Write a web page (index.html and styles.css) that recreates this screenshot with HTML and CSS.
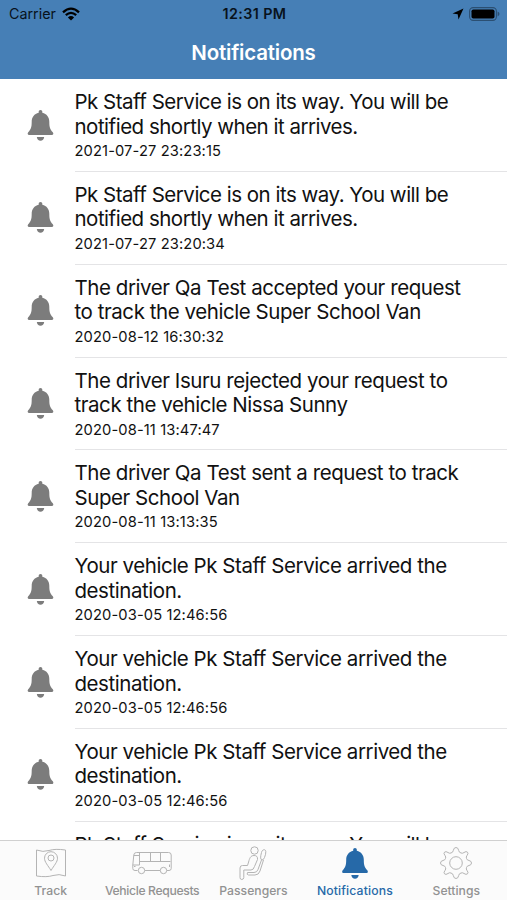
FILE: index.html
```html
<!DOCTYPE html>
<html lang="en">
<head>
<meta charset="utf-8">
<title>Notifications</title>
<link rel="stylesheet" href="styles.css">
</head>
<body>
<svg class="defs" aria-hidden="true">
  <symbol id="bell" viewBox="0 0 26 31">
    <path d="M13 0C11.900 0 11.200.8 11.200 1.800V2.800C6.800 3.700 4.200 7.300 4.200 11.800C4.200 17 3.600 19.300.7 22.300C-.3 23.600.1 25 1.700 25H24.300C25.900 25 26.300 23.600 25.300 22.300C22.400 19.300 21.800 17 21.800 11.800C21.800 7.300 19.200 3.700 14.800 2.800V1.800C14.800.8 14.100 0 13 0Z"/>
    <path d="M9.300 27H16.700C16.500 29.200 15 30.700 13 30.700S9.500 29.200 9.300 27Z"/>
  </symbol>
</svg>
<div class="screen">
  <header class="header">
    <div class="status">
      <div class="carrier"><span>Carrier</span>
        <svg class="wifi" viewBox="0 0 18 14"><path d="M1 5.300Q9-2 17 5.300" /><path d="M3.800 8.200Q9 3.600 14.200 8.200"/><path class="dot" d="M9 13.500L5.900 10.400Q9 7.800 12.100 10.400Z"/></svg>
      </div>
      <div class="clock">12:31 PM</div>
      <div class="power">
        <svg class="arrow" viewBox="0 0 12 12"><path d="M11.500.5L6.500 11.500L5.700 6.300L.5 5.500Z"/></svg>
        <svg class="battery" viewBox="0 0 31 14"><rect class="shell" x=".6" y=".6" width="26.800" height="12.800" rx="3.600"/><rect x="2.500" y="2.500" width="23" height="9" rx="1.800"/><path class="cap" d="M28.600 4.600Q30.500 5.500 30.500 7T28.600 9.400Z"/></svg>
      </div>
    </div>
    <h1>Notifications</h1>
  </header>
  <main class="list">
    <article class="row"><svg class="bell"><use href="#bell"/></svg><div class="body"><p class="tight">Pk Staff Service is on its way. You will be<br>notified shortly when it arrives.</p><time>2021-07-27 23:23:15</time></div></article>
    <article class="row"><svg class="bell"><use href="#bell"/></svg><div class="body"><p class="tight">Pk Staff Service is on its way. You will be<br>notified shortly when it arrives.</p><time>2021-07-27 23:20:34</time></div></article>
    <article class="row"><svg class="bell"><use href="#bell"/></svg><div class="body"><p>The driver Qa Test accepted your request<br>to track the vehicle Super School Van</p><time>2020-08-12 16:30:32</time></div></article>
    <article class="row"><svg class="bell"><use href="#bell"/></svg><div class="body"><p>The driver Isuru rejected your request to<br>track the vehicle Nissa Sunny</p><time>2020-08-11 13:47:47</time></div></article>
    <article class="row"><svg class="bell"><use href="#bell"/></svg><div class="body"><p>The driver Qa Test sent a request to track<br>Super School Van</p><time>2020-08-11 13:13:35</time></div></article>
    <article class="row"><svg class="bell"><use href="#bell"/></svg><div class="body"><p>Your vehicle Pk Staff Service arrived the<br>destination.</p><time>2020-03-05 12:46:56</time></div></article>
    <article class="row"><svg class="bell"><use href="#bell"/></svg><div class="body"><p>Your vehicle Pk Staff Service arrived the<br>destination.</p><time>2020-03-05 12:46:56</time></div></article>
    <article class="row"><svg class="bell"><use href="#bell"/></svg><div class="body"><p>Your vehicle Pk Staff Service arrived the<br>destination.</p><time>2020-03-05 12:46:56</time></div></article>
    <article class="row"><div class="bell"></div><div class="body"><p class="tight">Pk Staff Service is on its way. You will be</p></div></article>
  </main>
  <nav class="tabs">
    <a class="tab"><svg viewBox="0 0 40 36"><path d="M5.500 5Q12 7.500 18 5.500T34.500 5V31Q28 28.500 22 30.500T5.500 31Z"/><path d="M20 25.500C17 20.500 13.500 17 13.500 13.200A6.500 6.500 0 0 1 26.500 13.200C26.500 17 23 20.500 20 25.500Z"/><circle cx="20" cy="13" r="3"/></svg><span>Track</span></a>
    <a class="tab"><svg viewBox="0 0 40 36"><path d="M5.500 25.500H3Q.8 25.500.8 23.500V20L1.800 10Q2 7.500 4.500 7.500H36.500Q39.200 7.500 39.200 10V23.500Q39.200 25.500 37 25.500H34.800M28.200 25.500H12.800"/><path d="M2 10.500H7.500V20H.8M7.500 8V20M8 16.500H38.500M18.500 8V16.500M28.500 8V16.500M2 21.500H3.500M37.500 19.500V22"/><circle cx="9.500" cy="25.500" r="3.200"/><circle cx="31.500" cy="25.500" r="3.200"/></svg><span class="narrow">Vehicle Requests</span></a>
    <a class="tab"><svg viewBox="0 0 40 36"><circle cx="21.500" cy="5.500" r="3.700"/><path d="M21 10.500C17.500 10.500 16.500 13.500 15.600 17L14.500 20.500H9.500Q7 20.500 7 23V32.500Q7 34.500 8.800 34.500T10.800 32.500V25H18Q20.500 25 21.500 21.500L24.500 14.500Q25 10.500 21 10.500Z"/><path d="M28.500 7.500C29 4.500 32.500 3.500 32.800 6.500Q33 9 31.500 12.500Q30.500 15 29 15Q26.500 14.500 28.500 7.500ZM28.500 15L25 24.500Q24 27.500 21 27.500H14.500Q13.300 29.700 15.500 30H22Q25.700 30 27 26L30.500 15"/></svg><span>Passengers</span></a>
    <a class="tab active"><svg class="tab-bell"><use href="#bell"/></svg><span>Notifications</span></a>
    <a class="tab"><svg viewBox="0 0 40 36"><circle cx="20" cy="18" r="6.300"/><path d="M17.300 5.500Q17.800 2.500 20 2.500T22.700 5.500Q23 7.500 25 8Q26.700 8.700 28 7.500Q30.300 5.800 31.500 7.200T31 10.500Q29.800 12 30.500 13.500Q31 15.200 33 15.500Q35.500 16 35.500 18T33 20.500Q31 20.800 30.500 22.500Q29.800 24 31 25.500Q32.800 27.500 31.500 28.800T28 28.500Q26.700 27.300 25 28Q23 28.500 22.700 30.500Q22.200 33.500 20 33.500T17.300 30.500Q17 28.500 15 28Q13.300 27.300 12 28.500Q9.700 30.200 8.500 28.800T9 25.500Q10.200 24 9.500 22.500Q9 20.800 7 20.500Q4.500 20 4.500 18T7 15.500Q9 15.200 9.500 13.500Q10.200 12 9 10.500Q7.200 8.500 8.500 7.200T12 7.500Q13.300 8.700 15 8Q17 7.500 17.300 5.500Z"/></svg><span>Settings</span></a>
  </nav>
</div>
</body>
</html>
```
FILE: styles.css
```css
* { box-sizing: border-box; }
body { margin: 0; background: #fff; color: #111; font-family: Inter, sans-serif; }
.defs { display: none; }
.screen { display: flex; flex-direction: column; width: 507px; height: 900px; overflow: hidden; }
.header { flex: none; height: 79px; background: #467fb6; }
.status { display: grid; grid-template-columns: 1fr auto 1fr; align-items: center; height: 27px; padding: 0 7px 0 9px; color: #08121c; font-size: 14.300px; }
.carrier { display: flex; align-items: center; gap: 6px; }
.wifi { width: 18px; height: 14px; fill: none; stroke: #000; stroke-width: 2.300; }
.wifi .dot { fill: #000; stroke: none; }
.clock { font-weight: 600; letter-spacing: .4px; }
.power { display: flex; justify-content: flex-end; align-items: center; gap: 5px; }
.arrow { width: 12px; height: 12px; }
.battery { width: 31px; height: 14px; }
.shell { fill: none; stroke: #2b4f72; stroke-width: 1.100; }
.cap { fill: #2b4f72; }
h1 { margin: 0; color: #fff; font-size: 20.500px; font-weight: 600; line-height: 51px; letter-spacing: -.2px; text-align: center; }
.list { flex: 1; min-height: 0; overflow: hidden; }
.row { display: flex; height: 92.850px; padding-left: 27px; }
.bell { flex: none; width: 27px; height: 31px; margin: 30.500px 20.500px 0 0; fill: #7c7c7c; }
.body { flex: 1; padding-top: 11px; border-bottom: 1px solid #e4e4e6; white-space: nowrap; }
p { margin: 0; font-size: 20.500px; line-height: 24.500px; letter-spacing: -.44px; }
.tight { letter-spacing: -.5px; }
time { display: block; margin-top: 3px; font-size: 14.700px; line-height: 18px; letter-spacing: .12px; }
.tabs { flex: none; display: grid; grid-template-columns: repeat(5, 1fr); height: 60px; background: #fbfbfb; border-top: 1px solid #d0d0d0; }
.tab { display: flex; flex-direction: column; align-items: center; padding-top: 4px; color: #929292; font-size: 12.200px; font-weight: 500; white-space: nowrap; }
.tab svg { width: 40px; height: 36px; fill: none; stroke: #b4b4b4; stroke-width: 1; }
.tab span { margin-top: 2px; line-height: 16px; }
.tab .narrow { letter-spacing: -.36px; }
.active { color: #2669a8; letter-spacing: .15px; }
.tab .tab-bell { width: 26px; height: 31px; margin: 3px 0 2px; fill: #2669a8; stroke: none; }
```
